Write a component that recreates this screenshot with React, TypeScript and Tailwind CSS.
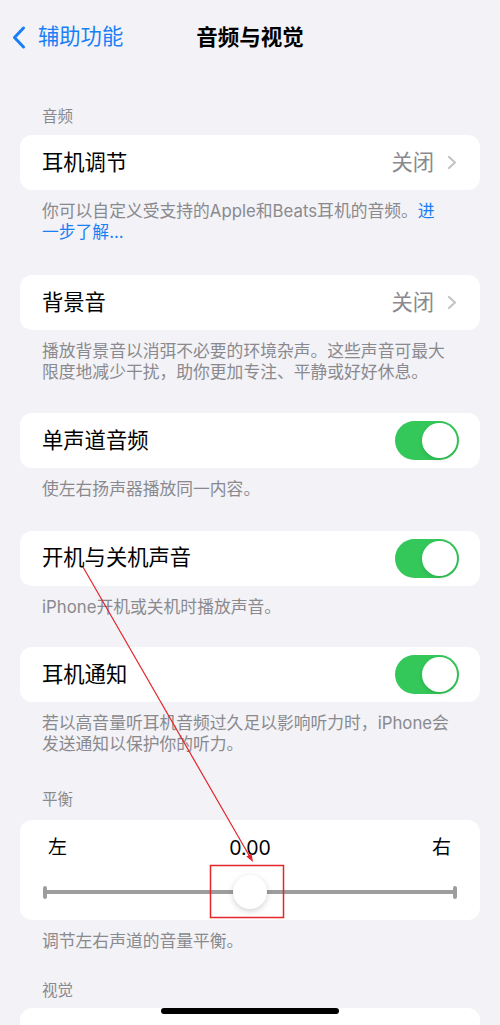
import React from 'react';

const FONT = "font-['Inter','Noto_Sans_CJK_SC',sans-serif]";

function BackChevron() {
    return (
        <svg width="14" height="23" viewBox="0 0 14 23" fill="none">
            <path d="M11.5 2 L2.5 11.5 L11.5 21" stroke="#1a7ff5" strokeWidth="3" strokeLinecap="round" strokeLinejoin="round" />
        </svg>
    );
}

function Chevron() {
    return (
        <svg width="10" height="15" viewBox="0 0 10 15" fill="none">
            <path d="M2 2 L8 7.5 L2 13" stroke="#c4c4c7" strokeWidth="2.2" strokeLinecap="round" strokeLinejoin="round" />
        </svg>
    );
}

function Toggle() {
    return (
        <div className="w-[64px] h-[39px] rounded-full bg-[#34c759] p-[2px] flex justify-end">
            <div className="w-[35px] h-[35px] rounded-full bg-white shadow-[0_2px_4px_rgba(0,0,0,0.12)]"></div>
        </div>
    );
}

function Header({ children, className = '' }: { children: React.ReactNode; className?: string }) {
    return <div className={`px-[42px] text-[15.5px] leading-[20px] text-[#8a8a8e] ${className}`}>{children}</div>;
}

function Footer({ children }: { children: React.ReactNode }) {
    return <div className="px-[42px] pt-[11px] text-[16.8px] leading-[20.5px] text-[#8a8a8e] whitespace-nowrap">{children}</div>;
}

function DisclosureRow({ label, value, className = 'h-[55px]' }: { label: string; value: string; className?: string }) {
    return (
        <div className={`mx-[20px] rounded-[12px] bg-white pl-[22px] pr-[23px] flex items-center justify-between ${className}`}>
            <span className="text-[21.3px] text-black">{label}</span>
            <div className="flex items-center gap-[13px]">
                <span className="text-[21.3px] text-[#8a8a8e]">{value}</span>
                <Chevron />
            </div>
        </div>
    );
}

function ToggleRow({ label, className = '' }: { label: string; className?: string }) {
    return (
        <div className={`mx-[20px] h-[55px] rounded-[12px] bg-white pl-[22px] pr-[21px] flex items-center justify-between ${className}`}>
            <span className="text-[21.3px] text-black">{label}</span>
            <Toggle />
        </div>
    );
}

function BalanceCard() {
    return (
        <div className="mx-[20px] h-[100px] rounded-[12px] bg-white">
            <div className="grid grid-cols-3 items-center pt-[18px] px-[28px] text-[19px] leading-[20px] text-black">
                <span>左</span>
                <span className="text-center text-[19.5px]">0.00</span>
                <span className="text-right pr-[1px]">右</span>
            </div>
            <div className="relative mt-[16px] h-[36px] px-[23px] flex items-center">
                <div className="w-[4px] h-[13px] rounded-full bg-[#9d9d9d]"></div>
                <div className="flex-1 h-[4px] bg-[#9d9d9d]"></div>
                <div className="w-[4px] h-[13px] rounded-full bg-[#9d9d9d]"></div>
                <div className="absolute left-[213px] top-[1px] w-[34px] h-[34px] rounded-full bg-white shadow-[0_2px_6px_rgba(0,0,0,0.18)]"></div>
            </div>
        </div>
    );
}

export default function App() {
    return (
        <div className={`relative w-[500px] h-[1025px] overflow-hidden bg-[#f2f2f7] ${FONT}`}>
            <nav className="h-[74px] grid grid-cols-[1fr_auto_1fr] items-center">
                <div className="flex items-center pl-[12px] gap-[12px]">
                    <BackChevron />
                    <span className="text-[21.3px] text-[#1a7ff5]">辅助功能</span>
                </div>
                <div className="text-[21.5px] font-semibold text-black">音频与视觉</div>
                <div></div>
            </nav>

            <Header className="mt-[33px] mb-[8px]">音频</Header>
            <DisclosureRow label="耳机调节" value="关闭" />
            <Footer>
                你可以自定义受支持的Apple和Beats耳机的音频。<span className="text-[#1a7ff5]">进</span>
                <br />
                <span className="text-[#1a7ff5]">一步了解...</span>
            </Footer>

            <DisclosureRow label="背景音" value="关闭" className="h-[55px] mt-[33px]" />
            <Footer>
                播放背景音以消弭不必要的环境杂声。这些声音可最大
                <br />
                限度地减少干扰，助你更加专注、平静或好好休息。
            </Footer>

            <ToggleRow label="单声道音频" className="mt-[31px]" />
            <Footer>使左右扬声器播放同一内容。</Footer>

            <ToggleRow label="开机与关机声音" className="mt-[31px]" />
            <Footer>iPhone开机或关机时播放声音。</Footer>

            <ToggleRow label="耳机通知" className="mt-[30px]" />
            <Footer>
                若以高音量听耳机音频过久足以影响听力时，iPhone会
                <br />
                发送通知以保护你的听力。
            </Footer>

            <Header className="mt-[36px] mb-[10px]">平衡</Header>
            <BalanceCard />
            <Footer>调节左右声道的音量平衡。</Footer>

            <Header className="mt-[29px] mb-[7px]">视觉</Header>
            <DisclosureRow label="LED闪烁以示提醒" value="关闭" className="h-[62px]" />

            {/* annotation drawn over the screenshot */}
            <svg className="absolute inset-0 pointer-events-none" width="500" height="1025" viewBox="0 0 500 1025" fill="none">
                <line x1="83" y1="567" x2="250" y2="857" stroke="#e3262b" strokeWidth="1.2" />
                <polygon points="253,862 251.6,853.6 246.4,856.6" fill="#e3262b" />
                <rect x="210.5" y="865.5" width="73" height="52" stroke="#e3262b" strokeWidth="1.5" />
            </svg>

            <div className="absolute bottom-[11px] left-[161px] w-[178px] h-[6px] rounded-full bg-black"></div>
        </div>
    );
}
